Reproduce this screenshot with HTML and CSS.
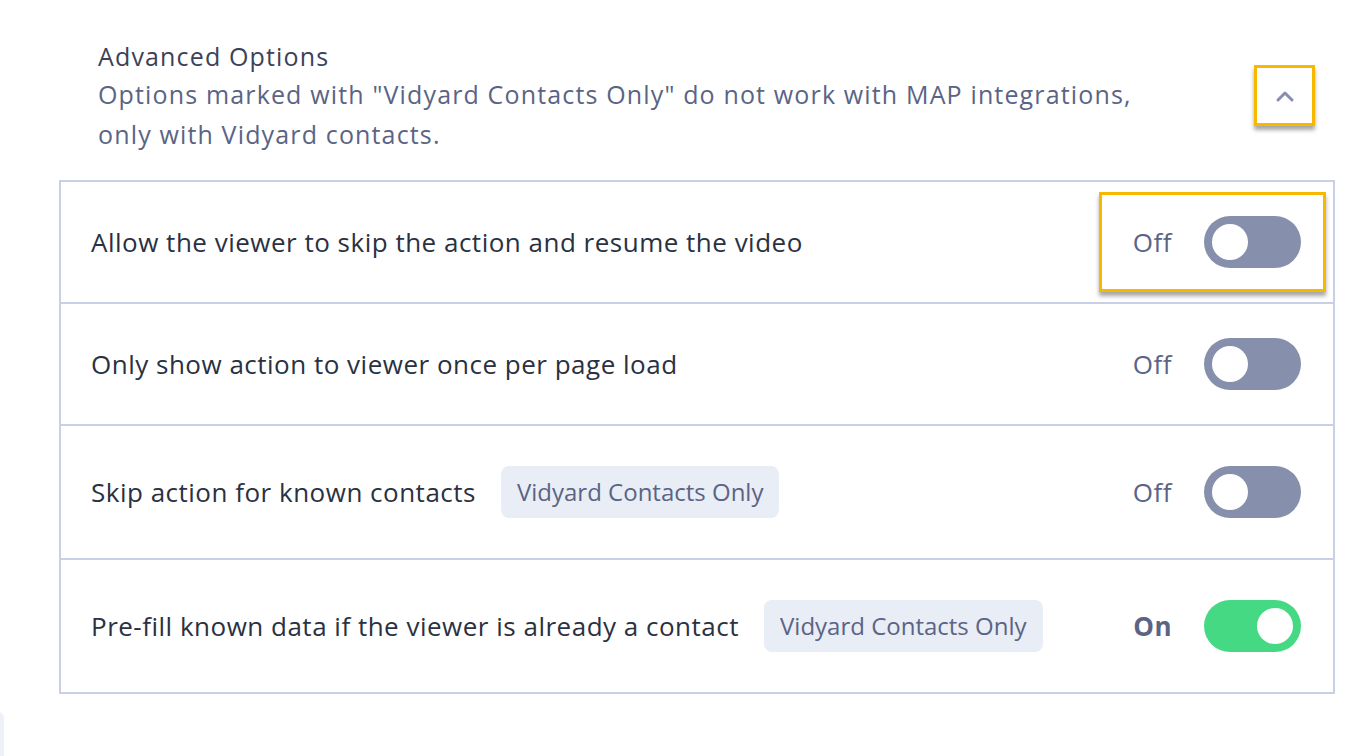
FILE: index.html
```html
<!DOCTYPE html>
<html lang="en">
<head>
    <meta charset="UTF-8">
    <title>Advanced Options</title>
    <link rel="stylesheet" href="styles.css">
</head>
<body>
<div class="panel">
    <div class="panel-head">
        <div class="head-text">
            <h3>Advanced Options</h3>
            <p>Options marked with "Vidyard Contacts Only" do not work with MAP integrations,<br>only with Vidyard contacts.</p>
        </div>
        <button class="collapse-btn highlight" aria-label="Collapse">
            <svg width="22" height="14" viewBox="0 0 22 14"><path d="M4 11 L11 4 L18 11" fill="none" stroke="#8690ad" stroke-width="3" stroke-linecap="round" stroke-linejoin="round"/></svg>
        </button>
    </div>

    <div class="options">
        <div class="option">
            <div class="option-label">Allow the viewer to skip the action and resume the video</div>
            <div class="option-control marked">
                <span class="state">Off</span>
                <span class="toggle"><span class="knob"></span></span>
            </div>
        </div>
        <div class="option">
            <div class="option-label">Only show action to viewer once per page load</div>
            <div class="option-control">
                <span class="state">Off</span>
                <span class="toggle"><span class="knob"></span></span>
            </div>
        </div>
        <div class="option tall">
            <div class="option-label">Skip action for known contacts <span class="badge">Vidyard Contacts Only</span></div>
            <div class="option-control">
                <span class="state">Off</span>
                <span class="toggle"><span class="knob"></span></span>
            </div>
        </div>
        <div class="option tall">
            <div class="option-label">Pre-fill known data if the viewer is already a contact <span class="badge">Vidyard Contacts Only</span></div>
            <div class="option-control">
                <span class="state on">On</span>
                <span class="toggle is-on"><span class="knob"></span></span>
            </div>
        </div>
    </div>
</div>
<div class="edge-tab"></div>
</body>
</html>
```

FILE: styles.css
```css
body { margin: 0; font-family: "Open Sans", "Noto Sans", sans-serif; background: #fff; color: #2a3142; }
.panel { width: 1276px; padding: 38px 0 0 59px; }
.panel-head { display: flex; justify-content: space-between; align-items: flex-start; padding: 0 20px 0 39px; height: 142px; }
.head-text h3 { margin: 0; font-size: 25px; font-weight: 400; line-height: 36px; letter-spacing: 1.15px; color: #3b4257; }
.head-text p { margin: 0; font-size: 25px; line-height: 40px; letter-spacing: 1.15px; color: #5a6485; }
.collapse-btn { margin-top: 27px; width: 61px; height: 61px; background: #fff; border: 3px solid #f7b900; box-shadow: 0 4px 4px rgba(0,0,0,0.35); display: flex; align-items: center; justify-content: center; padding: 0; cursor: pointer; }
.options { border: 2px solid #c9cfe4; }
.option { display: flex; align-items: center; justify-content: space-between; height: 120px; padding: 0 32px 0 30px; border-top: 2px solid #c9cfe4; }
.option:first-child { border-top: none; }
.option.tall { height: 132px; }
.option-label { font-size: 26px; letter-spacing: 0.5px; color: #2a3142; display: flex; align-items: center; }
.badge { display: inline-block; margin-left: 25px; padding: 0 16px; line-height: 52px; font-size: 24px; letter-spacing: 0; background: #e9edf5; color: #5a6485; border-radius: 8px; }
.option-control { display: flex; align-items: center; position: relative; }
.option-control.marked::after { content: ""; position: absolute; left: -34px; right: -25px; top: -24px; bottom: -24px; border: 3px solid #f7b900; box-shadow: 0 4px 4px rgba(0,0,0,0.35); }
.state { font-size: 26px; letter-spacing: 0.5px; color: #5a6485; margin-right: 32px; }
.state.on { font-weight: 700; }
.toggle { width: 97px; height: 52px; border-radius: 26px; background: #8690ad; position: relative; display: inline-block; }
.toggle .knob { position: absolute; left: 8px; top: 8px; width: 36px; height: 36px; border-radius: 50%; background: #fff; }
.toggle.is-on { background: #46d984; }
.toggle.is-on .knob { left: auto; right: 8px; }
.edge-tab { position: absolute; left: -8px; top: 712px; width: 12px; height: 60px; border-radius: 6px; background: #eef1f7; }
```
